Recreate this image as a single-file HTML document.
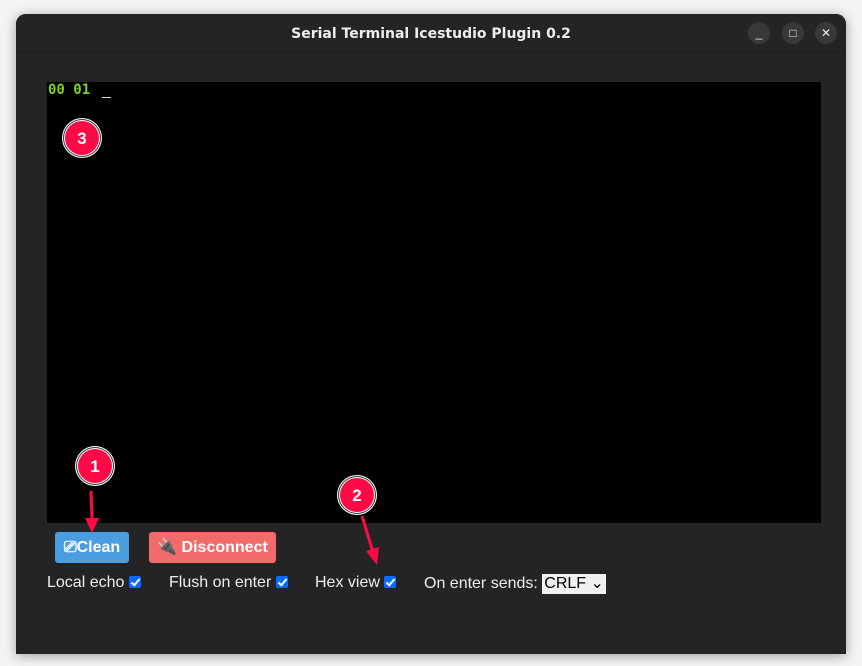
<!DOCTYPE html>
<html><head><meta charset="utf-8"><style>
html,body{margin:0;padding:0;width:862px;height:666px;background:#f4f4f4;overflow:hidden;font-family:"Liberation Sans",sans-serif}
.win{position:absolute;left:16px;top:14px;width:830px;height:640px;background:#242424;border-radius:10px 10px 0 0;box-shadow:0 2px 12px rgba(0,0,0,.35);overflow:hidden}
.tb{position:absolute;left:0;top:0;width:830px;height:37px;border-bottom:1px solid #1a1a1a;background:#242424}
.title{position:absolute;left:0;width:830px;top:12px;text-align:center;color:#eee;font-weight:bold;font-size:14px;font-family:"DejaVu Sans",sans-serif}
.wb{position:absolute;top:8px;width:22px;height:22px;border-radius:50%;background:#383838;color:#eee;font-size:12px;text-align:center;line-height:22px}
.term{position:absolute;left:31px;top:68px;width:774px;height:441px;background:#000}
.hex{position:absolute;left:1px;top:0;color:#7ed321;font-family:"DejaVu Sans Mono",monospace;font-weight:bold;font-size:14px}
.cur{position:absolute;left:55px;top:15px;width:9px;height:1px;background:#ddd}
.btn{position:absolute;top:518px;height:31px;border-radius:3px;color:#fff;font-weight:bold;font-size:16px;line-height:31px;text-align:center}
.row{position:absolute;top:560px;color:#eee;font-size:16px;white-space:nowrap}
.cb{display:inline-block;width:12px;height:12px;background:#0a6cff;border-radius:2px;vertical-align:-1px;position:relative}
.cb:after{content:"";position:absolute;left:4px;top:1px;width:3px;height:7px;border:solid #fff;border-width:0 2px 2px 0;transform:rotate(40deg)}
.sel{display:inline-block;background:#f0f0f0;color:#000;padding:0 2px;height:20px;line-height:20px;vertical-align:0}
svg{position:absolute;left:0;top:0}
</style></head><body>
<div class="win">
 <div class="tb"><div class="title">Serial Terminal Icestudio Plugin 0.2</div>
  <div class="wb" style="left:732px">_</div><div class="wb" style="left:766px">□</div><div class="wb" style="left:799px">✕</div></div>
 <div class="term"><div class="hex">00 01</div><div class="cur"></div></div>
 <div class="btn" style="left:39px;width:74px;background:#4a9ee0">⎚Clean</div>
 <div class="btn" style="left:133px;width:127px;background:#f26b6b">🔌 Disconnect</div>
 <div class="row" style="left:31px">Local echo <span class="cb"></span></div>
 <div class="row" style="left:153px">Flush on enter <span class="cb"></span></div>
 <div class="row" style="left:299px">Hex view <span class="cb"></span></div>
 <div class="row" style="left:408px">On enter sends: <span class="sel">CRLF ⌄</span></div>
</div>
<svg width="862" height="666">
 <g font-family="Liberation Sans,sans-serif" font-weight="bold" font-size="17" fill="#fff" text-anchor="middle">
  <circle cx="82" cy="138" r="20" fill="#fff"/><circle cx="82" cy="138" r="19" fill="#333"/><circle cx="82" cy="138" r="18" fill="#fff"/><circle cx="82" cy="138" r="17" fill="#ff0a47"/><text x="82" y="144">3</text>
  <circle cx="95" cy="466" r="20" fill="#fff"/><circle cx="95" cy="466" r="19" fill="#333"/><circle cx="95" cy="466" r="18" fill="#fff"/><circle cx="95" cy="466" r="17" fill="#ff0a47"/><text x="95" y="472">1</text>
  <circle cx="357" cy="495" r="20" fill="#fff"/><circle cx="357" cy="495" r="19" fill="#333"/><circle cx="357" cy="495" r="18" fill="#fff"/><circle cx="357" cy="495" r="17" fill="#ff0a47"/><text x="357" y="501">2</text>
 </g>
 <g stroke="#ff0a47" stroke-width="3" fill="#ff0a47">
  <line x1="91" y1="491" x2="92" y2="520"/><polygon points="85,518 99,518 92,533" stroke="none"/>
  <line x1="362" y1="516" x2="373" y2="552"/><polygon points="366,551 379,547 377,565" stroke="none"/>
 </g>
</svg>
</body></html>
